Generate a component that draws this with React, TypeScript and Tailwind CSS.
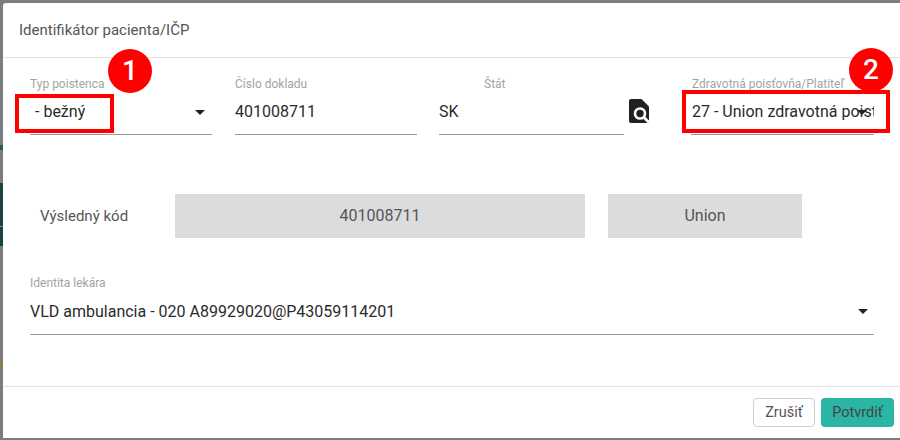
import React from "react";

function Arrow({ className = "" }: { className?: string }) {
  return (
    <svg width="10" height="5" viewBox="0 0 10 5" className={className}>
      <path d="M0 0h10L5 5z" fill="#222" />
    </svg>
  );
}

function Field({ label, value, width, arrowClass, labelClass = "", valueClass = "", heightClass = "h-[44px]" }: { label: string; value: string; width: string; arrowClass?: string; labelClass?: string; valueClass?: string; heightClass?: string }) {
  return (
    <div className={`flex flex-col ${width}`}>
      <div className={`h-[14px] text-[12px] leading-[14px] text-[#a3a3a3] ${labelClass}`}>{label}</div>
      <div className={`flex ${heightClass} items-center justify-between border-b border-[#9a9a9a] pb-[1px] text-[16px] text-[#2b2b2b]`}>
        <span className={`overflow-hidden whitespace-nowrap ${valueClass}`}>{value}</span>
        {arrowClass && <Arrow className={`shrink-0 ${arrowClass}`} />}
      </div>
    </div>
  );
}

export default function App() {
  return (
    <div className="relative flex h-[440px] w-[900px] flex-col overflow-hidden bg-[#7d7d7d] font-['Roboto',sans-serif]">
      <div className="flex h-[438px] w-[900px]">
        <div className="flex w-[3px] shrink-0 flex-col">
          <div className="h-[145px]" />
          <div className="h-[5px] bg-[#2a5a58]" />
          <div className="h-[33px]" />
          <div className="h-[43px] bg-[#16423f]" />
          <div className="h-[1px] bg-[#7d8a88]" />
          <div className="h-[19px] bg-[#16423f]" />
          <div className="h-[115px]" />
          <div className="h-[8px] bg-[#8a7d4a]" />
        </div>
        <div className="mt-[3px] flex h-[435px] w-[897px] flex-col rounded-tl-[3px] bg-white">
          <div className="flex h-[55px] items-center border-b border-[#e3e3e3] pl-[16px] text-[15px] text-[#555]">
            Identifikátor pacienta/IČP
          </div>

          <div className="flex items-start pl-[27px] pt-[19px]">
            <Field label="Typ poistenca" value="- bežný" width="w-[182px]" arrowClass="mr-[7px]" valueClass="pl-[5px]" />
            <Field label="Číslo dokladu" value="401008711" width="ml-[23px] w-[182px]" />
            <Field label="Štát" value="SK" width="ml-[22px] w-[185px]" labelClass="pl-[45px]" />
            <svg width="22" height="25" viewBox="0 0 22 25" className="ml-[5px] mt-[22px] shrink-0">
              <path d="M2 0h10.5L20 7.5V22a2 2 0 0 1-2 2H2a2 2 0 0 1-2-2V2a2 2 0 0 1 2-2z" fill="#212121" />
              <circle cx="11" cy="14.5" r="5" fill="none" stroke="#fff" strokeWidth="2.6" />
              <path d="M14.5 18l5.5 5.5" stroke="#fff" strokeWidth="2.8" />
            </svg>
            <Field label="Zdravotná poisťovňa/Platiteľ" value="27 - Union zdravotná poist" width="ml-[40px] w-[183px]" valueClass="pl-[1px]" labelClass="pl-[1px]" />
          </div>

          <div className="flex items-center pl-[37px] pt-[59px]">
            <div className="w-[135px] text-[15px] text-[#555]">Výsledný kód</div>
            <div className="flex h-[44px] w-[410px] items-center justify-center bg-[#dcdcdc] text-[16px] text-[#555]">401008711</div>
            <div className="ml-[23px] flex h-[44px] w-[194px] items-center justify-center bg-[#dcdcdc] text-[16px] text-[#555]">Union</div>
          </div>

          <div className="pl-[27px] pr-[26px] pt-[38px]">
            <Field label="Identita lekára" value="VLD ambulancia - 020 A89929020@P43059114201" width="w-full" arrowClass="mr-[6px]" heightClass="h-[45px]" />
          </div>

          <div className="mt-[51px] flex h-[50px] items-start justify-end gap-[6px] border-t border-[#e3e3e3] pr-[6px] pt-[11px]">
            <button className="h-[29px] w-[62px] rounded-[4px] border border-[#cfcfcf] bg-white text-[14.5px] text-[#555]">Zrušiť</button>
            <button className="h-[29px] w-[73px] rounded-[4px] bg-[#2bb5a4] text-[14.5px] text-[#444]">Potvrdiť</button>
          </div>
        </div>
      </div>

      <div className="absolute left-[108px] top-[49px] flex h-[44px] w-[44px] items-center justify-center rounded-full bg-[#ff0000] text-[28px] font-medium text-white">1</div>
      <div className="absolute left-[849px] top-[48px] flex h-[44px] w-[44px] items-center justify-center rounded-full bg-[#ff0000] text-[28px] font-medium text-white">2</div>

      <div className="absolute left-[15px] top-[94px] h-[39px] w-[99px] border-[4px] border-[#ff0000]" />
      <div className="absolute left-[682px] top-[90px] h-[43px] w-[208px] border-[4px] border-[#ff0000]" />
      <Arrow className="absolute left-[857px] top-[110px]" />
    </div>
  );
}
